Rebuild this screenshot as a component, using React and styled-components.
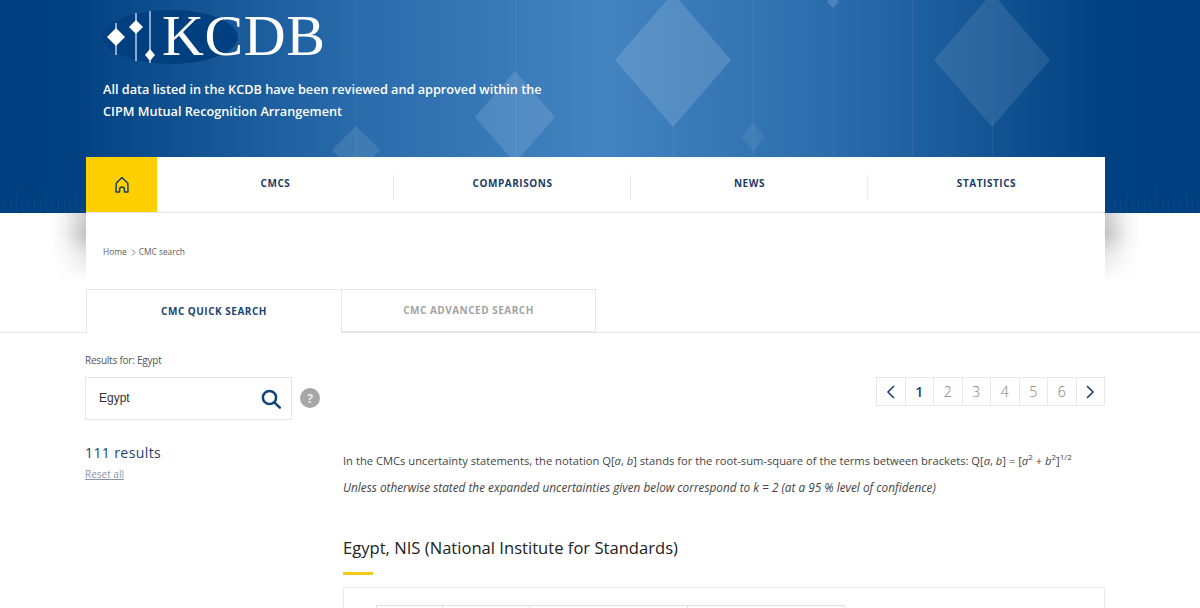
import React from "react";
import styled, { createGlobalStyle } from "styled-components";

const Global = createGlobalStyle`
  html, body { margin: 0; padding: 0; background: #fff; overflow: hidden; }
  body { font-family: "Open Sans", "Liberation Sans", sans-serif; color: #444; }
  #root { height: 608px; overflow: hidden; }
  * { box-sizing: border-box; }
`;

const Header = styled.header`
  position: relative;
  z-index: 1;
  height: 213px;
  padding: 0 95px 0 86px;
  background: linear-gradient(90deg, #003f80 0, #014181 6%, #2a6cab 30%, #4283c0 50%, #2a6cab 70%, #014181 92%, #003f80 100%);
  display: flex;
  flex-direction: column;
`;

const Decor = styled.svg`
  position: absolute;
  left: 0;
  top: 0;
  width: 1200px;
  height: 213px;
`;

const Hero = styled.div`
  position: relative;
  height: 157px;
  padding-left: 17px;
`;

const LogoSvg = styled.svg`
  display: block;
  width: 240px;
  height: 70px;
  margin-top: 3px;
  margin-left: -4px;
`;

const Tagline = styled.p`
  margin: 5px 0 0;
  width: 470px;
  font-size: 12.7px;
  line-height: 22px;
  font-weight: 600;
  color: #fff;
`;

const Nav = styled.nav`
  position: relative;
  display: flex;
  height: 56px;
  background: #fff;
  border-bottom: 1px solid #e6e6e6;
`;

const HomeTab = styled.a`
  flex: 0 0 71px;
  display: flex;
  align-items: center;
  justify-content: center;
  background: #ffd000;
  color: #1c3f66;
`;

const NavItem = styled.a`
  position: relative;
  flex: 1;
  display: flex;
  align-items: center;
  justify-content: center;
  padding-bottom: 4px;
  font-size: 10px;
  font-weight: 700;
  letter-spacing: 0.55px;
  color: #1d3b66;
  &:not(:last-child)::after {
    content: "";
    position: absolute;
    right: 0;
    top: 18px;
    height: 25px;
    width: 1px;
    background: #ececec;
  }
`;

const Panel = styled.div`
  position: relative;
  margin: 0 95px 0 86px;
  height: 76px;
  &::before {
    content: "";
    position: absolute;
    left: -36px;
    right: -36px;
    top: 0;
    height: 70px;
    background: linear-gradient(90deg, transparent 0, rgba(0, 0, 0, 0.05) 14px, rgba(0, 0, 0, 0.24) 36px, rgba(0, 0, 0, 0.24) calc(100% - 36px), rgba(0, 0, 0, 0.05) calc(100% - 14px), transparent 100%);
    -webkit-mask-image: linear-gradient(180deg, rgba(0, 0, 0, 0.8) 0, #000 30%, rgba(0, 0, 0, 0.4) 60%, transparent 100%);
    mask-image: linear-gradient(180deg, rgba(0, 0, 0, 0.8) 0, #000 30%, rgba(0, 0, 0, 0.4) 60%, transparent 100%);
  }
`;

const PanelBody = styled.div`
  position: relative;
  height: 100%;
  padding: 33px 0 0 17px;
  background: #fff;
`;

const Crumbs = styled.div`
  display: flex;
  align-items: center;
  font-size: 8.4px;
  line-height: 12px;
  color: #5c5c5c;
`;

const CrumbSep = styled.svg`
  width: 5px;
  height: 7px;
  margin: 0 3px 0 4px;
`;

const TabBar = styled.div`
  display: flex;
  height: 44px;
  padding-left: 86px;
  border-bottom: 1px solid #e6e6e6;
`;

const Tab = styled.div`
  width: ${(p) => p.$w}px;
  height: ${(p) => (p.$active ? 44 : 43)}px;
  margin-left: ${(p) => (p.$active ? 0 : -1)}px;
  padding-bottom: 2px;
  display: flex;
  align-items: center;
  justify-content: center;
  background: #fff;
  border: 1px solid #e8e8e8;
  border-bottom: ${(p) => (p.$active ? "0" : "1px solid #e8e8e8")};
  font-size: 10px;
  font-weight: 700;
  letter-spacing: 0.5px;
  color: ${(p) => (p.$active ? "#1d4373" : "#a3a3a3")};
`;

const Main = styled.main`
  display: grid;
  grid-template-columns: 258px 762px;
  padding: 0 95px 0 85px;
`;

const Side = styled.aside`
  padding-top: 20px;
`;

const ResultsFor = styled.div`
  font-size: 10px;
  line-height: 14px;
  letter-spacing: -0.22px;
  color: #555;
`;

const SearchRow = styled.div`
  display: flex;
  align-items: center;
  gap: 8px;
  margin-top: 10px;
`;

const SearchBox = styled.div`
  width: 207px;
  height: 43px;
  padding: 0 10px 2px 13px;
  display: flex;
  align-items: center;
  justify-content: space-between;
  border: 1px solid #e6e6e6;
  font-family: "Liberation Sans", Arial, sans-serif;
  font-size: 12px;
  color: #333;
`;

const SearchIcon = styled.svg`
  width: 20px;
  height: 20px;
  margin-top: 2px;
`;

const Help = styled.span`
  width: 20px;
  height: 20px;
  margin-top: -1px;
  border-radius: 50%;
  display: flex;
  align-items: center;
  justify-content: center;
  background: #a6a6a6;
  color: #eee;
  font-size: 12px;
  font-weight: 700;
`;

const Count = styled.div`
  margin-top: 23px;
  font-size: 14px;
  line-height: 20px;
  font-weight: 500;
  letter-spacing: 0.4px;
  color: #1d4373;
`;

const Reset = styled.a`
  display: block;
  margin-top: 4px;
  font-size: 10px;
  line-height: 14px;
  color: #8a93a6;
  text-decoration: underline;
`;

const Content = styled.section`
  padding-top: 44px;
`;

const Pager = styled.div`
  display: flex;
  justify-content: flex-end;
`;

const PageCell = styled.span`
  width: 29.5px;
  height: 29px;
  margin-left: -1px;
  display: flex;
  align-items: center;
  justify-content: center;
  border: 1px solid #e8e8e8;
  font-size: 14px;
  font-weight: ${(p) => (p.$active ? 600 : 300)};
  color: ${(p) => (p.$active ? "#1d4373" : "#7c7c7c")};
`;

const Note = styled.p`
  margin: ${(p) => p.$top}px 0 0;
  font-size: ${(p) => (p.$italic ? 11.8 : 11.2)}px;
  line-height: 16px;
  color: #444;
  font-style: ${(p) => (p.$italic ? "italic" : "normal")};
  sup { font-size: 8px; line-height: 0; }
`;

const Heading = styled.h2`
  margin: 41px 0 0;
  font-size: 16.6px;
  line-height: 24px;
  font-weight: 500;
  color: #222;
`;

const Rule = styled.div`
  width: 30px;
  height: 3px;
  margin-top: 12px;
  background: #f5c918;
`;

const Card = styled.div`
  height: 60px;
  margin-top: 12px;
  padding: 17px 0 0 32px;
  border: 1px solid #ececec;
`;

const Table = styled.div`
  display: flex;
  width: 469px;
  height: 30px;
  border-top: 1px solid #dedede;
  border-right: 1px solid #e4e4e4;
`;

const Col = styled.div`
  width: ${(p) => p.$w}px;
  border-left: 1px solid #e0e0e0;
`;

const Chevron = ({ dir }) => (
  <svg width="10" height="14" viewBox="0 0 10 14" fill="none" stroke="#1d4373" strokeWidth="1.6">
    <path d={dir === "l" ? "M8 1 2 7l6 6" : "M2 1l6 6-6 6"} />
  </svg>
);

const ticks = [];
for (let x = 4; x < 86; x += 6) ticks.push(x);
for (let x = 1108; x < 1200; x += 6) ticks.push(x);

export default function App() {
  return (
    <>
      <Global />
      <Header>
        <Decor viewBox="0 0 1200 213">
          <g stroke="#fff" strokeOpacity="0.06" strokeWidth="1">
            <path d="M356.5 0V157M515.5 0V157M673.5 120V157M753.5 0V157M833.5 0V157M912.5 0V157M992.5 120V157" />
          </g>
          <g fill="#fff">
            <path d="M515 71l40 46-40 46-40-46z" fillOpacity="0.13" />
            <path d="M356 126l24 24-24 24-24-24z" fillOpacity="0.1" />
            <path d="M673-7l58 67-58 67-58-67z" fillOpacity="0.14" />
            <path d="M753 123l12 14-12 14-12-14z" fillOpacity="0.07" />
            <path d="M833-6l6 8-6 6-6-6z" fillOpacity="0.15" />
            <path d="M992-7l58 67-58 67-58-67z" fillOpacity="0.1" />
          </g>
          <g stroke="#fff" strokeOpacity="0.04" strokeWidth="1">
            {ticks.map((x, i) => (
              <path key={x} d={`M${x + 0.5} ${i % 5 === 2 ? 190 : 200}V212`} />
            ))}
          </g>
        </Decor>
        <Hero>
          <LogoSvg viewBox="0 0 240 70">
            <ellipse cx="71.5" cy="34" rx="67.5" ry="27" fill="#003f80" />
            <path d="M128 13a26 24 0 0 1 0 42a28 25 0 0 0 0-42z" fill="#2a6cab" fillOpacity="0.6" />
            <g stroke="#d5e6f5" strokeWidth="1.3">
              <path d="M17 20V52M37 10V58M51 8V60" />
            </g>
            <g fill="#fff">
              <path d="M17 25l9 9-9 9-9-9z" />
              <path d="M37 17l7 7-7 7-7-7z" />
              <path d="M51 46l5 6-5 6-5-6z" />
            </g>
            <text x="63" y="52" fontFamily="'Liberation Serif', serif" fontSize="58" fill="#fff" textLength="163">KCDB</text>
          </LogoSvg>
          <Tagline>
            All data listed in the KCDB have been reviewed and approved within the CIPM Mutual Recognition Arrangement
          </Tagline>
        </Hero>
        <Nav>
          <HomeTab>
            <svg width="16" height="18" viewBox="0 0 16 18" fill="none" stroke="currentColor" strokeWidth="1.5" strokeLinejoin="round">
              <path d="M8 1.5 2.2 7.2 2 16h3.6v-2.6a2.4 2.4 0 0 1 4.8 0V16H14l-.2-8.8z" />
            </svg>
          </HomeTab>
          <NavItem>CMCS</NavItem>
          <NavItem>COMPARISONS</NavItem>
          <NavItem>NEWS</NavItem>
          <NavItem>STATISTICS</NavItem>
        </Nav>
      </Header>
      <Panel>
        <PanelBody>
          <Crumbs>
            Home
            <CrumbSep viewBox="0 0 5 7" fill="none" stroke="#5f5f5f" strokeWidth="0.8">
              <path d="M1 .5 4 3.5 1 6.5" />
            </CrumbSep>
            CMC search
          </Crumbs>
        </PanelBody>
      </Panel>
      <TabBar>
        <Tab $active $w={256}>CMC QUICK SEARCH</Tab>
        <Tab $w={255}>CMC ADVANCED SEARCH</Tab>
      </TabBar>
      <Main>
        <Side>
          <ResultsFor>Results for: Egypt</ResultsFor>
          <SearchRow>
            <SearchBox>
              Egypt
              <SearchIcon viewBox="0 0 20 20" fill="none" stroke="#0f4379" strokeWidth="2.5">
                <circle cx="8.5" cy="8.5" r="6.6" />
                <path d="m13.4 13.4 5.4 5.2" strokeLinecap="round" />
              </SearchIcon>
            </SearchBox>
            <Help>?</Help>
          </SearchRow>
          <Count>111 results</Count>
          <Reset>Reset all</Reset>
        </Side>
        <Content>
          <Pager>
            <PageCell><Chevron dir="l" /></PageCell>
            <PageCell $active>1</PageCell>
            <PageCell>2</PageCell>
            <PageCell>3</PageCell>
            <PageCell>4</PageCell>
            <PageCell>5</PageCell>
            <PageCell>6</PageCell>
            <PageCell><Chevron dir="r" /></PageCell>
          </Pager>
          <Note $top={47}>
            In the CMCs uncertainty statements, the notation Q[<i>a</i>, <i>b</i>] stands for the root-sum-square of the terms between brackets: Q[<i>a</i>, <i>b</i>] = [<i>a</i><sup>2</sup> + <i>b</i><sup>2</sup>]<sup>1/2</sup>
          </Note>
          <Note $top={10} $italic>
            Unless otherwise stated the expanded uncertainties given below correspond to k = 2 (at a 95 % level of confidence)
          </Note>
          <Heading>Egypt, NIS (National Institute for Standards)</Heading>
          <Rule />
          <Card>
            <Table>
              <Col $w={66} />
              <Col $w={87} />
              <Col $w={158} />
              <Col $w={157} />
            </Table>
          </Card>
        </Content>
      </Main>
    </>
  );
}
